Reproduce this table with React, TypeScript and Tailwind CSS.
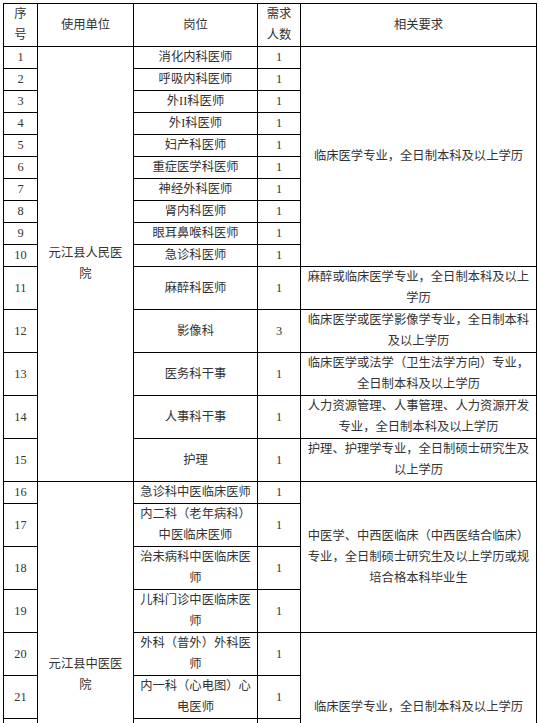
type Span = { text: string; rows: number }
type Row = {
  no: number
  post: string
  count: number
  h: 22 | 43 | 64
  unit?: Span
  req?: Span
}

const rows: Row[] = [
  { no: 1, post: '消化内科医师', count: 1, h: 22, unit: { text: '元江县人民医院', rows: 15 }, req: { text: '临床医学专业，全日制本科及以上学历', rows: 10 } },
  { no: 2, post: '呼吸内科医师', count: 1, h: 22 },
  { no: 3, post: '外II科医师', count: 1, h: 22 },
  { no: 4, post: '外I科医师', count: 1, h: 22 },
  { no: 5, post: '妇产科医师', count: 1, h: 22 },
  { no: 6, post: '重症医学科医师', count: 1, h: 22 },
  { no: 7, post: '神经外科医师', count: 1, h: 22 },
  { no: 8, post: '肾内科医师', count: 1, h: 22 },
  { no: 9, post: '眼耳鼻喉科医师', count: 1, h: 22 },
  { no: 10, post: '急诊科医师', count: 1, h: 22 },
  { no: 11, post: '麻醉科医师', count: 1, h: 43, req: { text: '麻醉或临床医学专业，全日制本科及以上学历', rows: 1 } },
  { no: 12, post: '影像科', count: 3, h: 43, req: { text: '临床医学或医学影像学专业，全日制本科及以上学历', rows: 1 } },
  { no: 13, post: '医务科干事', count: 1, h: 43, req: { text: '临床医学或法学（卫生法学方向）专业，全日制本科及以上学历', rows: 1 } },
  { no: 14, post: '人事科干事', count: 1, h: 43, req: { text: '人力资源管理、人事管理、人力资源开发专业，全日制本科及以上学历', rows: 1 } },
  { no: 15, post: '护理', count: 1, h: 43, req: { text: '护理、护理学专业，全日制硕士研究生及以上学历', rows: 1 } },
  { no: 16, post: '急诊科中医临床医师', count: 1, h: 22, unit: { text: '元江县中医医院', rows: 9 }, req: { text: '中医学、中西医临床（中西医结合临床）专业，全日制硕士研究生及以上学历或规培合格本科毕业生', rows: 4 } },
  { no: 17, post: '内二科（老年病科）中医临床医师', count: 1, h: 43 },
  { no: 18, post: '治未病科中医临床医师', count: 1, h: 43 },
  { no: 19, post: '儿科门诊中医临床医师', count: 1, h: 43 },
  { no: 20, post: '外科（普外）外科医师', count: 1, h: 43, req: { text: '临床医学专业，全日制本科及以上学历', rows: 3 } },
  { no: 21, post: '内一科（心电图）心电医师', count: 1, h: 43 },
  { no: 22, post: '放射科医师', count: 1, h: 64 },
  { no: 23, post: '针灸推拿科中医临床医师', count: 1, h: 43, req: { text: '针灸推拿学专业，全日制本科及以上学历', rows: 1 } },
  { no: 24, post: '中药房中药师', count: 1, h: 43, req: { text: '中药学专业，全日制本科及以上学历', rows: 1 } },
]

const heights = { 22: 'h-[22px]', 43: 'h-[43px]', 64: 'h-[64px]' }

const cell = 'border border-black text-center align-middle px-[5px] py-0'

export default function App() {
  return (
    <div className="min-h-screen bg-white pl-[3px] pt-[3px] text-[#333333] text-[12.3px] leading-[21px] [font-family:'Liberation_Serif','Noto_Sans_CJK_SC',sans-serif]">
      <table className="table-fixed border-collapse w-[533px]">
        <colgroup>
          <col className="w-[34px]" />
          <col className="w-[96px]" />
          <col className="w-[124px]" />
          <col className="w-[43px]" />
          <col className="w-[236px]" />
        </colgroup>
        <thead>
          <tr className="h-[43px]">
            <th className={`${cell} font-normal`}>序号</th>
            <th className={`${cell} font-normal`}>使用单位</th>
            <th className={`${cell} font-normal`}>岗位</th>
            <th className={`${cell} font-normal`}>需求人数</th>
            <th className={`${cell} font-normal`}>相关要求</th>
          </tr>
        </thead>
        <tbody>
          {rows.map(r => (
            <tr key={r.no} className={heights[r.h]}>
              <td className={cell}>{r.no}</td>
              {r.unit && (
                <td rowSpan={r.unit.rows} className={`${cell} px-[6px]`}>
                  {r.unit.text}
                </td>
              )}
              <td className={cell}>{r.post}</td>
              <td className={cell}>{r.count}</td>
              {r.req && (
                <td rowSpan={r.req.rows} className={cell}>
                  {r.req.text}
                </td>
              )}
            </tr>
          ))}
        </tbody>
      </table>
    </div>
  )
}
